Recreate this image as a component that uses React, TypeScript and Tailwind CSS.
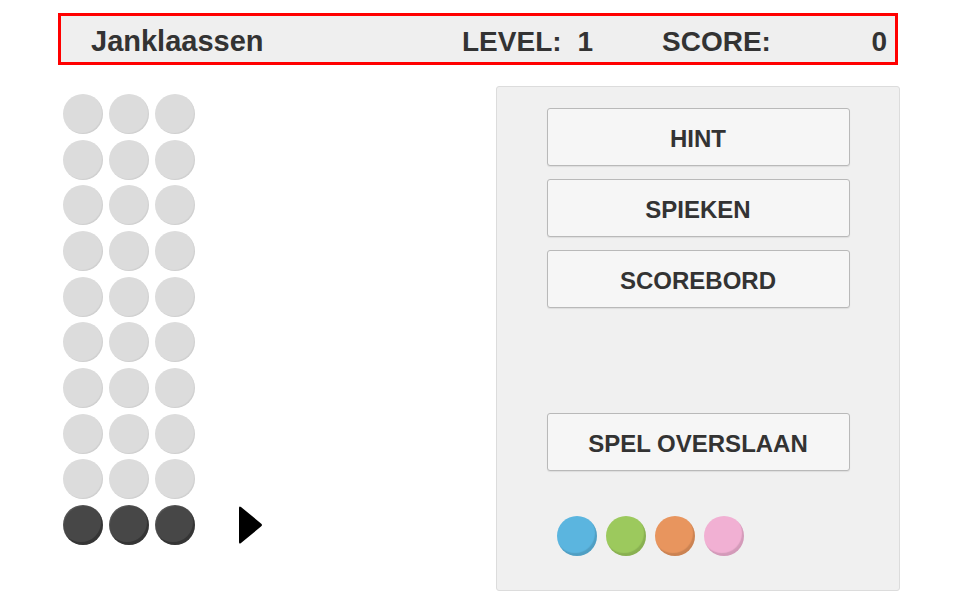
const ROWS = 10
const COLS = 3

const pegColors = ['#5bb5df', '#9cc95d', '#e8955e', '#f1b0d3']

function Peg({ color, dark }: { color: string; dark?: boolean }) {
  return (
    <div
      className={
        dark
          ? 'h-10 w-10 rounded-full shadow-[inset_-2px_-3px_0_rgba(0,0,0,0.25),inset_1px_1px_0_rgba(255,255,255,0.08)]'
          : 'h-10 w-10 rounded-full shadow-[inset_-1px_-1px_1px_rgba(0,0,0,0.06)]'
      }
      style={{ backgroundColor: color }}
    />
  )
}

function Button({ label }: { label: string }) {
  return (
    <button className="flex h-[58px] w-[303px] items-center justify-center rounded-[3px] border border-[#b9b9b9] bg-[#f6f6f6] pt-[3px] text-[24px] font-bold text-[#333333] shadow-[0_1px_1px_rgba(0,0,0,0.08)]">
      {label}
    </button>
  )
}

export default function App() {
  return (
    <div className="min-h-[600px] w-[960px] bg-white font-['Liberation_Sans',Arial,sans-serif]">
      {/* Header */}
      <div className="ml-[58px] pt-[13px]">
        <div className="flex h-[52px] w-[840px] items-center border-[3px] border-[#ff0000] bg-[#efefef] pl-[30px] pr-[8px] pt-[5px] text-[28px] font-bold leading-none text-[#333333]">
          <div className="flex-1 text-[29px]">Janklaassen</div>
          <div className="flex w-[200px] gap-[16px]">
            <span>LEVEL:</span>
            <span>1</span>
          </div>
          <div className="flex w-[225px] justify-between">
            <span>SCORE:</span>
            <span>0</span>
          </div>
        </div>
      </div>

      {/* Main */}
      <div className="mt-[21px] flex items-start">
        {/* Board */}
        <div className="ml-[63px] flex w-[433px] items-end pt-[8px]">
          <div className="grid grid-cols-3 gap-x-[6px] gap-y-[5.67px]">
            {Array.from({ length: ROWS * COLS }).map((_, i) => {
              const last = i >= (ROWS - 1) * COLS
              return <Peg key={i} color={last ? '#474747' : '#dcdcdc'} dark={last} />
            })}
          </div>
          <div className="ml-[43px] flex h-10 items-center">
            <svg width="25" height="40" viewBox="0 0 25 40">
              <path d="M3 2 L23 18.5 Q25 20 23 21.5 L3 38 Q1 39.5 1 37 L1 3 Q1 0.5 3 2 Z" fill="#000" />
            </svg>
          </div>
        </div>

        {/* Panel */}
        <div className="flex h-[505px] w-[404px] flex-col items-center rounded-[3px] border border-[#dcdcdc] bg-[#f0f0f0] pt-[21px]">
          <div className="flex flex-col gap-[13px]">
            <Button label="HINT" />
            <Button label="SPIEKEN" />
            <Button label="SCOREBORD" />
          </div>
          <div className="mt-[105px]">
            <Button label="SPEL OVERSLAAN" />
          </div>
          <div className="mt-[45px] flex w-full gap-[9px] pl-[60px]">
            {pegColors.map((c) => (
              <div
                key={c}
                className="h-10 w-10 rounded-full shadow-[inset_-2px_-3px_1px_rgba(0,0,0,0.12)]"
                style={{ backgroundColor: c }}
              />
            ))}
          </div>
        </div>
      </div>
    </div>
  )
}
